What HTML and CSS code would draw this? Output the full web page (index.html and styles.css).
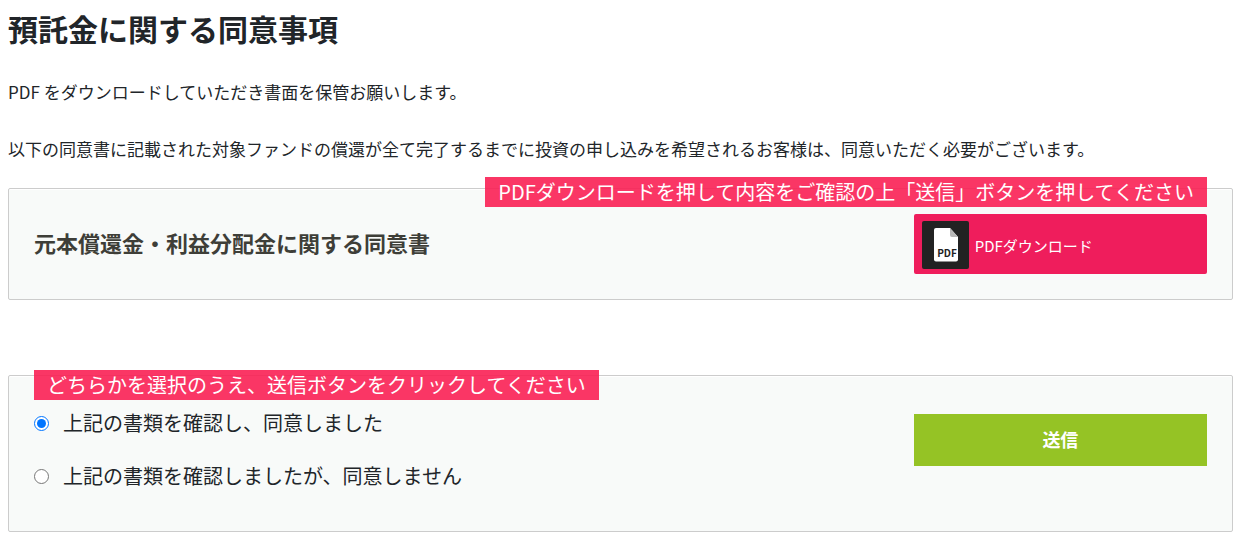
FILE: index.html
```html
<!DOCTYPE html>
<html lang="ja">
<head>
    <meta charset="UTF-8">
    <meta name="viewport" content="width=device-width, initial-scale=1.0">
    <title>預託金に関する同意事項</title>
    <link rel="stylesheet" href="styles.css">
</head>
<body>
    <h1>預託金に関する同意事項</h1>
    <p>PDF をダウンロードしていただき書面を保管お願いします。</p>
    <p>以下の同意書に記載された対象ファンドの償還が全て完了するまでに投資の申し込みを希望されるお客様は、同意いただく必要がございます。</p>

    <section class="card document">
        <span class="notice notice-right">PDFダウンロードを押して内容をご確認の上「送信」ボタンを押してください</span>
        <h2>元本償還金・利益分配金に関する同意書</h2>
        <a class="download" href="#">
            <svg class="pdf-icon" viewBox="0 0 47 48" aria-hidden="true">
                <rect width="47" height="48" rx="2" fill="#222"/>
                <path d="M14 7h14l8 9v22.500a2 2 0 0 1-2 2H14a2 2 0 0 1-2-2V9a2 2 0 0 1 2-2z" fill="#fff"/>
                <path d="M28 7l8 9h-6a2 2 0 0 1-2-2z" fill="#b8b8b8"/>
                <text x="25" y="36" text-anchor="middle">PDF</text>
            </svg>
            PDFダウンロード
        </a>
    </section>

    <form class="card agreement">
        <span class="notice notice-left">どちらかを選択のうえ、送信ボタンをクリックしてください</span>
        <div class="options">
            <label><input type="radio" name="agree" value="yes" checked>上記の書類を確認し、同意しました</label>
            <label><input type="radio" name="agree" value="no">上記の書類を確認しましたが、同意しません</label>
        </div>
        <button class="submit" type="submit">送信</button>
    </form>
</body>
</html>
```
FILE: styles.css
```css
* {
    box-sizing: border-box;
}
body {
    margin: 0;
    padding: 6px 12px 16px 8px;
    font-family: 'Noto Sans CJK JP', sans-serif;
    font-size: 17px;
    line-height: 27px;
    color: #212529;
    background: #fff;
}
h1 {
    margin: 0 0 27px;
    font-size: 30px;
    line-height: 45px;
}
p {
    margin: 0 0 30px;
}
.card {
    position: relative;
    display: grid;
    grid-template-columns: 3fr 1fr;
    border: 1px solid #ccc;
    border-radius: 2px;
    background: #f8faf9;
    box-shadow: inset 0 1px 0 #fff;
}
.document {
    margin: -4px 0 75px;
    padding: 25px;
    align-items: center;
}
.document h2 {
    margin: 0;
    padding-bottom: 4px;
    font-size: 22px;
    color: #3e3e38;
}
.notice {
    position: absolute;
    padding: 0 13px;
    font-size: 20px;
    line-height: 30px;
    color: #fff;
    background: rgba(249, 32, 84, 0.9);
}
.notice-right {
    top: -12px;
    right: 25px;
}
.notice-left {
    top: -6px;
    left: 25px;
}
.download {
    display: flex;
    align-items: center;
    gap: 6px;
    height: 60px;
    padding: 2px 8px 0;
    border-radius: 2px;
    font-size: 15px;
    color: #fff;
    background: #ef1d5c;
    text-decoration: none;
}
.pdf-icon {
    width: 47px;
    height: 48px;
}
.pdf-icon text {
    font-size: 10px;
    font-weight: bold;
    fill: #222;
}
.agreement {
    padding: 32px 25px 40px;
    align-items: center;
}
.options {
    display: grid;
    gap: 23px;
}
.options label {
    display: flex;
    align-items: center;
    gap: 14px;
    font-size: 20px;
    line-height: 30px;
}
.options input {
    width: 15px;
    height: 15px;
    margin: 0;
}
.submit {
    align-self: start;
    height: 52px;
    margin-top: 6px;
    padding: 0 0 2px;
    border: none;
    font-family: inherit;
    font-size: 18px;
    font-weight: bold;
    color: #fff;
    background: #95c325;
    cursor: pointer;
}
```
